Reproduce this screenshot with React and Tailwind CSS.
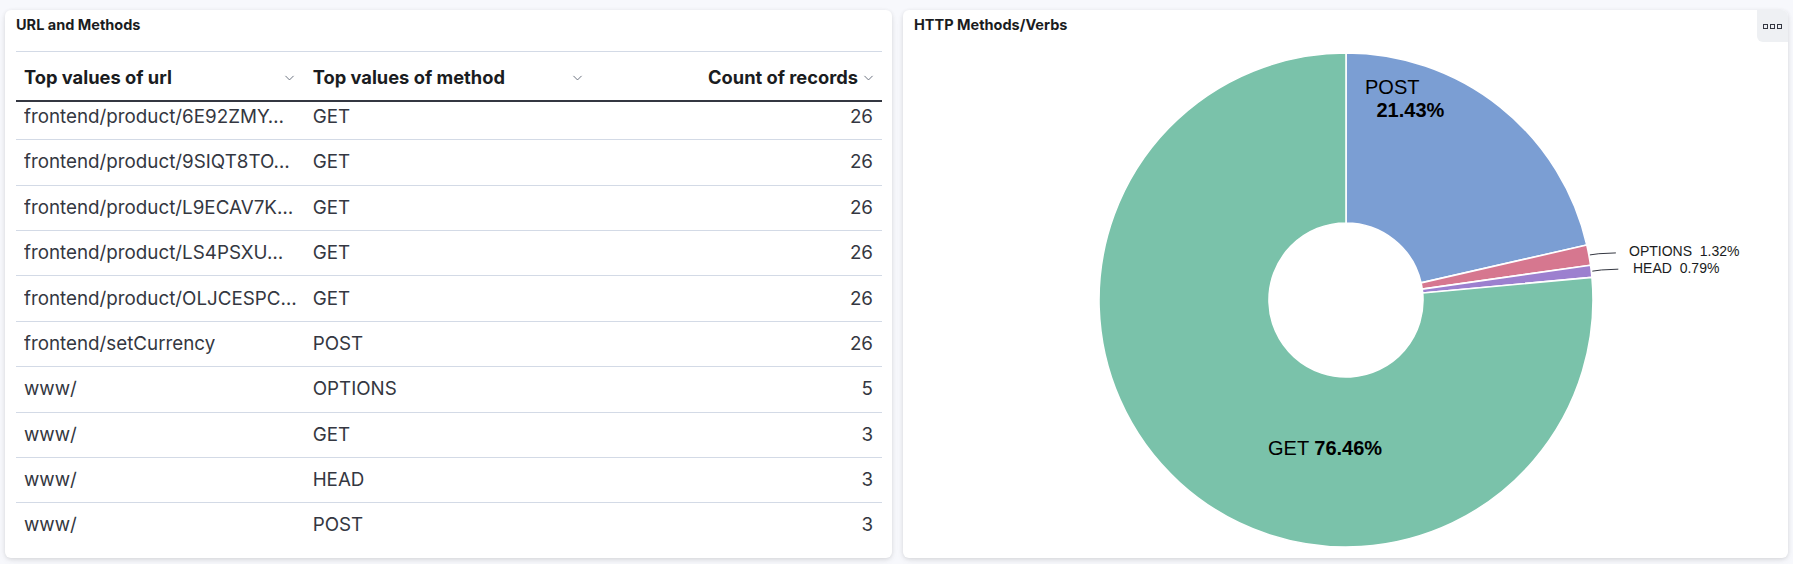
import React from 'react';

// adresy skrocone tak jak w tabeli
const rows = [
  { url: 'frontend/product/6E92ZMY…', method: 'GET', count: 26 },
  { url: 'frontend/product/9SIQT8TO…', method: 'GET', count: 26 },
  { url: 'frontend/product/L9ECAV7K…', method: 'GET', count: 26 },
  { url: 'frontend/product/LS4PSXU…', method: 'GET', count: 26 },
  { url: 'frontend/product/OLJCESPC…', method: 'GET', count: 26 },
  { url: 'frontend/setCurrency', method: 'POST', count: 26 },
  { url: 'www/', method: 'OPTIONS', count: 5 },
  { url: 'www/', method: 'GET', count: 3 },
  { url: 'www/', method: 'HEAD', count: 3 },
  { url: 'www/', method: 'POST', count: 3 },
];

const slices = [
  { label: 'POST', value: 21.43, color: '#7b9ed3' },
  { label: 'OPTIONS', value: 1.32, color: '#d6778f' },
  { label: 'HEAD', value: 0.79, color: '#9c80cf' },
  { label: 'GET', value: 76.46, color: '#7ac2aa' },
];

const CX = 443;
const CY = 256;
const R = 247;
const RI = 77;

// punkt na okregu, kat liczony od gory zgodnie z zegarem
const pt = (r, a) => [CX + r * Math.sin(a), CY - r * Math.cos(a)];

const arcPath = (a0, a1) => {
  const large = a1 - a0 > Math.PI ? 1 : 0;
  const [x0, y0] = pt(R, a0);
  const [x1, y1] = pt(R, a1);
  const [x2, y2] = pt(RI, a1);
  const [x3, y3] = pt(RI, a0);
  return `M${x0} ${y0} A${R} ${R} 0 ${large} 1 ${x1} ${y1} L${x2} ${y2} A${RI} ${RI} 0 ${large} 0 ${x3} ${y3} Z`;
};

function Chevron() {
  return (
    <svg className="w-[13px] h-[13px] shrink-0" viewBox="0 0 16 16" fill="none" stroke="#69707d" strokeWidth="1.2">
      <path d="M3 6l5 5 5-5" />
    </svg>
  );
}

function Donut() {
  let acc = 0;
  const arcs = slices.map((s) => {
    const a0 = (acc / 100) * Math.PI * 2;
    acc += s.value;
    const a1 = (acc / 100) * Math.PI * 2;
    return { ...s, a0, a1 };
  });

  const opt = arcs[1];
  const head = arcs[2];
  const [ox, oy] = pt(R + 1, (opt.a0 + opt.a1) / 2);
  const [hx, hy] = pt(R + 1, (head.a0 + head.a1) / 2);

  return (
    <svg width="885" height="514" className="block" style={{ fontFamily: '"Liberation Sans", Arial, sans-serif' }}>
      {arcs.map((a) => (
        <path key={a.label} d={arcPath(a.a0, a.a1)} fill={a.color} stroke="#fff" strokeWidth="1.6" strokeLinejoin="round" />
      ))}

      <text x="462" y="50" fontSize="20" fill="#000">POST</text>
      <text x="473.5" y="72.5" fontSize="20" fontWeight="700" fill="#000">21.43%</text>

      <text x="365" y="411" fontSize="20" fill="#000">
        GET <tspan fontWeight="700">76.46%</tspan>
      </text>

      <path d={`M${ox} ${oy} L${ox + 9} ${oy - 1.2} L${ox + 26} ${oy - 2}`} stroke="#343741" strokeWidth="1" fill="none" />
      <path d={`M${hx} ${hy} L${hx + 9} ${hy - 1.2} L${hx + 26} ${hy - 2}`} stroke="#343741" strokeWidth="1" fill="none" />

      <text x="726" y="212" fontSize="14" fill="#1a1c21" xmlSpace="preserve">OPTIONS  1.32%</text>
      <text x="730" y="229" fontSize="14" fill="#1a1c21" xmlSpace="preserve">HEAD  0.79%</text>
    </svg>
  );
}

const panel = 'bg-white rounded-md shadow-[0_1px_4px_rgba(0,0,0,0.10),0_3px_10px_-2px_rgba(0,0,0,0.08)]';

export default function App() {
  return (
    <div
      className="w-[1793px] h-[564px] bg-[#f7f8fc] flex gap-[11px] px-[5px] pt-[10px] pb-[6px] text-[#343741]"
      style={{ fontFamily: 'Inter, "Noto Sans", sans-serif' }}
    >
      {/* lewy panel: tabela */}
      <div className={`${panel} w-[887px] shrink-0 flex flex-col pl-[11px] pr-[10px]`}>
        <div className="h-[41px] pt-[7px] text-[14.5px] leading-[16px] font-bold text-[#1a1c21]">URL and Methods</div>

        <div className="grid grid-cols-3 h-[51px] pt-[3px] border-t border-[#d3dae6] border-b-2 border-b-[#343741] text-[18.3px] font-bold text-[#1a1c21]">
          <div className="flex items-center justify-between pl-[8px] pr-[9px]">
            <span>Top values of url</span>
            <Chevron />
          </div>
          <div className="flex items-center justify-between pl-[8px] pr-[9px]">
            <span>Top values of method</span>
            <Chevron />
          </div>
          <div className="flex items-center justify-end gap-[4px] px-[7px]">
            <span>Count of records</span>
            <Chevron />
          </div>
        </div>

        <div className="overflow-hidden h-[446px]">
          <div className="-mt-[7px]">
            {rows.map((r, i) => (
              <div key={i} className="grid grid-cols-3 h-[45.36px] border-b border-[#d3dae6] text-[18.8px]">
                <div className="flex items-center pl-[8px] pr-[4px] min-w-0">
                  <span className="whitespace-nowrap overflow-hidden">{r.url}</span>
                </div>
                <div className="flex items-center pl-[8px]">{r.method}</div>
                <div className="flex items-center justify-end px-[9px]">{r.count}</div>
              </div>
            ))}
          </div>
        </div>
      </div>

      {/* prawy panel: wykres */}
      <div className={`${panel} flex-1 min-w-0 flex flex-col relative overflow-hidden`}>
        <div className="h-[34px] pt-[7px] pl-[11px] text-[14.5px] leading-[16px] font-bold text-[#1a1c21]">HTTP Methods/Verbs</div>
        <button className="absolute top-0 right-0 w-[31px] h-[32px] bg-[#eef0f3] rounded-bl-md flex items-center justify-center gap-[2px]">
          <span className="w-[5px] h-[5px] border border-[#343741]" />
          <span className="w-[5px] h-[5px] border border-[#343741]" />
          <span className="w-[5px] h-[5px] border border-[#343741]" />
        </button>
        <Donut />
      </div>
    </div>
  );
}
